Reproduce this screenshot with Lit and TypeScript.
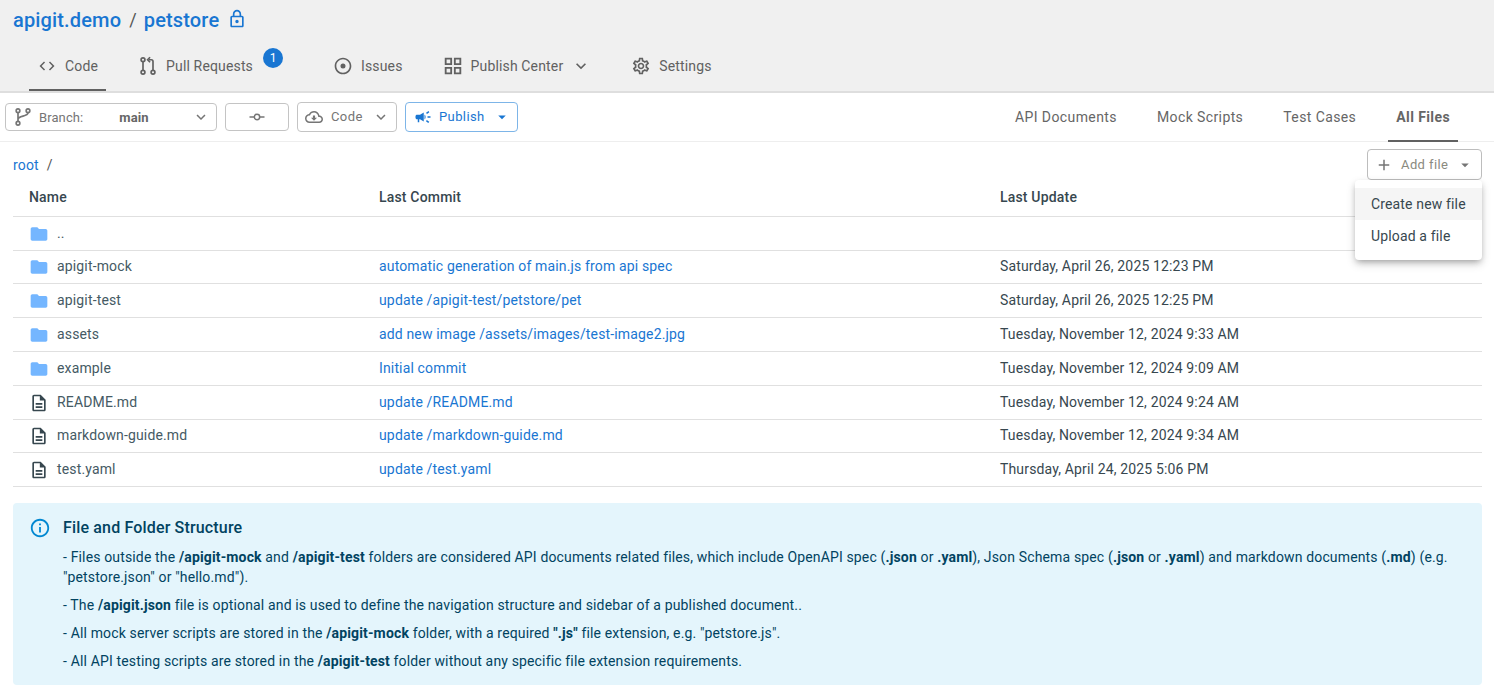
import {css, html, LitElement, svg} from 'lit';
import {customElement} from 'lit/decorators.js';
import {classMap} from 'lit/directives/class-map.js';

const P = {
  code: 'M9.4 16.6 4.8 12l4.6-4.6L8 6l-6 6 6 6 1.4-1.4zm5.2 0 4.6-4.6-4.6-4.6L16 6l6 6-6 6-1.4-1.4z',
  lock: 'M18 8h-1V6c0-2.76-2.24-5-5-5S7 3.24 7 6v2H6c-1.1 0-2 .9-2 2v10c0 1.1.9 2 2 2h12c1.1 0 2-.9 2-2V10c0-1.1-.9-2-2-2zM9 6c0-1.66 1.34-3 3-3s3 1.34 3 3v2H9V6zm9 14H6V10h12v10zm-6-3c1.1 0 2-.9 2-2s-.9-2-2-2-2 .9-2 2 .9 2 2 2z',
  radio: 'M12 2C6.48 2 2 6.48 2 12s4.48 10 10 10 10-4.48 10-10S17.52 2 12 2zm0 18c-4.42 0-8-3.58-8-8s3.58-8 8-8 8 3.58 8 8-3.58 8-8 8zm0-11a3 3 0 1 0 0 6 3 3 0 0 0 0-6z',
  grid: 'M3 3v8h8V3H3zm6 6H5V5h4v4zm-6 4v8h8v-8H3zm6 6H5v-4h4v4zm4-16v8h8V3h-8zm6 6h-4V5h4v4zm-6 4v8h8v-8h-8zm6 6h-4v-4h4v4z',
  chevron: 'M16.59 8.59 12 13.17 7.41 8.59 6 10l6 6 6-6z',
  gear: 'M19.43 12.98c.04-.32.07-.64.07-.98 0-.34-.03-.66-.07-.98l2.11-1.65c.19-.15.24-.42.12-.64l-2-3.46c-.09-.16-.26-.25-.44-.25-.06 0-.12.01-.17.03l-2.49 1c-.52-.4-1.08-.73-1.69-.98l-.38-2.65C14.46 2.18 14.25 2 14 2h-4c-.25 0-.46.18-.49.42l-.38 2.65c-.61.25-1.17.59-1.69.98l-2.49-1c-.06-.02-.12-.03-.18-.03-.17 0-.34.09-.43.25l-2 3.46c-.13.22-.07.49.12.64l2.11 1.65c-.04.32-.07.65-.07.98 0 .33.03.66.07.98l-2.11 1.65c-.19.15-.24.42-.12.64l2 3.46c.09.16.26.25.44.25.06 0 .12-.01.17-.03l2.49-1c.52.4 1.08.73 1.69.98l.38 2.65c.03.24.24.42.49.42h4c.25 0 .46-.18.49-.42l.38-2.65c.61-.25 1.17-.59 1.69-.98l2.49 1c.06.02.12.03.18.03.17 0 .34-.09.43-.25l2-3.46c.12-.22.07-.49-.12-.64l-2.11-1.65zm-1.98-1.71c.04.31.05.52.05.73 0 .21-.02.43-.05.73l-.14 1.13.89.7 1.08.84-.7 1.21-1.27-.51-1.04-.42-.9.68c-.43.32-.84.56-1.25.73l-1.06.43-.16 1.13-.2 1.35h-1.4l-.19-1.35-.16-1.13-1.06-.43c-.43-.18-.83-.41-1.23-.71l-.91-.7-1.06.43-1.27.51-.7-1.21 1.08-.84.89-.7-.14-1.13c-.03-.31-.05-.54-.05-.74s.02-.43.05-.73l.14-1.13-.89-.7-1.08-.84.7-1.21 1.27.51 1.04.42.9-.68c.43-.32.84-.56 1.25-.73l1.06-.43.16-1.13.2-1.35h1.39l.19 1.35.16 1.13 1.06.43c.43.18.83.41 1.23.71l.91.7 1.06-.43 1.27-.51.7 1.21-1.07.85-.89.7.14 1.13zM12 8c-2.21 0-4 1.79-4 4s1.79 4 4 4 4-1.79 4-4-1.79-4-4-4zm0 6c-1.1 0-2-.9-2-2s.9-2 2-2 2 .9 2 2-.9 2-2 2z',
  cloud: 'M19.35 10.04C18.67 6.59 15.64 4 12 4 9.11 4 6.6 5.64 5.35 8.04 2.34 8.36 0 10.91 0 14c0 3.31 2.69 6 6 6h13c2.76 0 5-2.24 5-5 0-2.64-2.05-4.78-4.65-4.96zM19 18H6c-2.21 0-4-1.79-4-4 0-2.05 1.53-3.76 3.56-3.97l1.07-.11.5-.95C8.08 7.14 9.94 6 12 6c2.62 0 4.88 1.86 5.39 4.43l.3 1.5 1.53.11c1.56.1 2.78 1.41 2.78 2.96 0 1.65-1.35 3-3 3zm-5.55-8h-2.9v3H8l4 4 4-4h-2.55z',
  campaign: 'M18 11v2h4v-2h-4zm-2 6.61c.96.71 2.21 1.65 3.2 2.39.4-.53.8-1.07 1.2-1.6-.99-.74-2.24-1.68-3.2-2.4-.4.54-.8 1.08-1.2 1.61zM20.4 5.6c-.4-.53-.8-1.07-1.2-1.6-.99.74-2.24 1.68-3.2 2.4.4.53.8 1.07 1.2 1.6.96-.72 2.21-1.65 3.2-2.4zM4 9c-1.1 0-2 .9-2 2v2c0 1.1.9 2 2 2h1v4h2v-4h1l5 3V6L8 9H4zm11.5 3c0-1.33-.58-2.53-1.5-3.35v6.69c.92-.81 1.5-2.01 1.5-3.34z',
  folder: 'M10 4H4c-1.1 0-1.99.9-1.99 2L2 18c0 1.1.9 2 2 2h16c1.1 0 2-.9 2-2V8c0-1.1-.9-2-2-2h-8l-2-2z',
  file: 'M8 16h8v2H8zm0-4h8v2H8zm6-10H6c-1.1 0-2 .9-2 2v16c0 1.1.89 2 1.99 2H18c1.1 0 2-.9 2-2V8l-6-6zm4 18H6V4h7v5h5v11z',
  info: 'M11 7h2v2h-2zm0 4h2v6h-2zm1-9C6.48 2 2 6.48 2 12s4.48 10 10 10 10-4.48 10-10S17.52 2 12 2zm0 18c-4.41 0-8-3.59-8-8s3.59-8 8-8 8 3.59 8 8-3.59 8-8 8z',
  add: 'M19 13h-6v6h-2v-6H5v-2h6V5h2v6h6v2z',
  drop: 'M7 10l5 5 5-5z',
};

const icon = (d: string, size: number, color = 'currentColor') => html`<svg
  class="ic" width=${size} height=${size} viewBox="0 0 24 24" fill=${color}>${svg`<path d=${d}></path>`}</svg>`;

const stroked = (body: unknown, size: number) => html`<svg
  class="ic" width=${size} height=${size} viewBox="0 0 24 24" fill="none"
  stroke="currentColor" stroke-width="2">${body}</svg>`;

const prIcon = stroked(svg`
  <circle cx="6" cy="4.5" r="2.3"></circle>
  <circle cx="6" cy="19.5" r="2.3"></circle>
  <circle cx="18" cy="19.5" r="2.3"></circle>
  <path d="M6 7v10M18 17V6.5a2 2 0 0 0-2-2h-3"></path>
  <path d="M14.5 1.5 11.5 4.5l3 3" ></path>`, 20);

const branchIcon = stroked(svg`
  <circle cx="6" cy="4.5" r="2.2"></circle>
  <circle cx="6" cy="19.5" r="2.2"></circle>
  <circle cx="18" cy="4.5" r="2.2"></circle>
  <path d="M6 7v10M18 7c0 5-12 3-12 8"></path>`, 20);

const commitIcon = stroked(svg`
  <circle cx="12" cy="12" r="3.6"></circle>
  <path d="M2 12h6M16 12h6"></path>`, 18);

// `short` rows come out a pixel lower than the rest in the original table
const rows = [
  {n: '..', c: '', u: '', f: true, short: false},
  {n: 'apigit-mock', c: 'automatic generation of main.js from api spec', u: 'Saturday, April 26, 2025 12:23 PM', f: true, short: true},
  {n: 'apigit-test', c: 'update /apigit-test/petstore/pet', u: 'Saturday, April 26, 2025 12:25 PM', f: true, short: false},
  {n: 'assets', c: 'add new image /assets/images/test-image2.jpg', u: 'Tuesday, November 12, 2024 9:33 AM', f: true, short: false},
  {n: 'example', c: 'Initial commit', u: 'Tuesday, November 12, 2024 9:09 AM', f: true, short: false},
  {n: 'README.md', c: 'update /README.md', u: 'Tuesday, November 12, 2024 9:24 AM', f: false, short: false},
  {n: 'markdown-guide.md', c: 'update /markdown-guide.md', u: 'Tuesday, November 12, 2024 9:34 AM', f: false, short: true},
  {n: 'test.yaml', c: 'update /test.yaml', u: 'Thursday, April 24, 2025 5:06 PM', f: false, short: false},
];

@customElement('app-root')
export class AppRoot extends LitElement {
  static override styles = css`
    :host {
      display: block;
      font-family: Roboto, 'Liberation Sans', sans-serif;
      font-size: 14px;
      letter-spacing: .15px;
      color: #37474f;
      background: #fff;
      min-height: 695px;
    }
    .ic { display: block; flex: none; }
    a { color: #1976d2; text-decoration: none; }

    .top {
      background: #f0f0f0;
      height: 93px;
      box-sizing: border-box;
      border-bottom: 2px solid #dedede;
      padding-left: 13px;
    }
    .repo {
      display: flex;
      align-items: center;
      height: 39px;
      font-size: 20px;
      font-weight: 500;
      color: #1976d2;
    }
    .repo .sep { margin: 0 7px 0 8px; font-weight: 400; color: #555; font-size: 18px; }
    .repo .ic { margin-left: 8px; margin-top: -2px; }
    .tabs { display: flex; height: 52px; padding-left: 16px; }
    .tab {
      position: relative;
      display: flex;
      align-items: center;
      gap: 8px;
      padding: 2px 8px 0;
      margin-right: 24px;
      color: #616161;
      box-sizing: border-box;
    }
    .tab.on { border-bottom: 2px solid #616161; padding: 4px 8px 0 9px; }
    .tab.on .ic { margin-right: 1px; }
    .tab.after-badge { margin-left: 40px; }
    .tab .big { display: flex; margin: 0 -1px; }
    .badge {
      position: absolute;
      top: 9px;
      right: -22px;
      width: 20px;
      height: 20px;
      border-radius: 50%;
      background: #1976d2;
      color: #fff;
      font-size: 12px;
      display: flex;
      align-items: center;
      justify-content: center;
      letter-spacing: 0;
    }

    .bar {
      display: flex;
      align-items: center;
      height: 49px;
      box-sizing: border-box;
      border-bottom: 1px solid #eeeeee;
      padding-left: 5px;
      gap: 8px;
    }
    .btn {
      display: flex;
      align-items: center;
      box-sizing: border-box;
      height: 30px;
      border: 1px solid #c4c4c4;
      border-radius: 4px;
      font-size: 13px;
      color: #757575;
      letter-spacing: .4px;
      white-space: nowrap;
    }
    .branch { width: 212px; height: 28px; padding-left: 7px; letter-spacing: .1px; }
    .branch b { margin-left: 36px; font-weight: 700; color: #666; }
    .branch .lbl { margin-left: 6px; }
    .branch .ic:last-child { margin-left: auto; margin-right: 6px; }
    .commit { width: 64px; height: 28px; justify-content: center; }
    .cloud { width: 100px; padding: 0 0 1px 7px; gap: 8px; }
    .cloud .ic:last-child { margin-left: auto; margin-right: 6px; }
    .publish { width: 113px; border-color: #7db5e8; color: #1976d2; padding: 0 0 1px 8px; gap: 7px; }
    .publish .ic:last-child { margin-left: 1px; }
    .views { display: flex; margin-left: auto; height: 48px; padding-right: 36px; gap: 24px; }
    .view {
      display: flex;
      align-items: center;
      padding: 0 8px;
      color: #666;
      letter-spacing: .4px;
      box-sizing: border-box;
    }
    .view.on { font-weight: 700; border-bottom: 2px solid #616161; margin-bottom: -1px; }

    .crumbs {
      position: relative;
      display: flex;
      align-items: center;
      height: 38px;
      box-sizing: border-box;
      padding: 8px 0 0 13px;
      gap: 8px;
    }
    .crumbs span { color: #555; }
    .add {
      position: absolute;
      right: 12px;
      top: 7px;
      width: 115px;
      height: 31px;
      padding-left: 7px;
      gap: 8px;
      color: #8a8a80;
      border-color: #bdbdbd;
    }
    .add .ic:first-child { color: #757575; }
    .add .ic:last-child { color: #757575; }
    .menu {
      position: absolute;
      right: 12px;
      top: 38px;
      width: 127px;
      padding: 8px 0;
      background: #fff;
      border-radius: 4px;
      box-shadow: 0 3px 6px -2px rgba(0,0,0,.3), 0 4px 10px rgba(0,0,0,.16);
      z-index: 2;
    }
    .menu div { height: 32px; padding-left: 16px; display: flex; align-items: center; }
    .menu div:first-child { background: #f5f5f5; }

    .table { margin: 0 12px 0 13px; }
    .row {
      display: grid;
      grid-template-columns: 350px 621px 1fr;
      align-items: center;
      height: 34px;
      border-bottom: 1px solid #e0e0e0;
      box-sizing: border-box;
      padding: 0 0 1px 16px;
    }
    .row.short { height: 33px; padding-bottom: 2px; }
    .head { height: 37px; padding-bottom: 2px; font-weight: 500; letter-spacing: .18px; }
    .name { display: flex; align-items: center; gap: 8px; color: #455a64; }
    .name .ic { color: #37474f; margin-top: 2px; }

    .note {
      margin: 16px 12px 0 13px;
      background: #e4f5fc;
      border-radius: 4px;
      color: #014361;
      padding: 14px 16px 10px;
      display: flex;
      gap: 12px;
      height: 182px;
      box-sizing: border-box;
    }
    .note .info { color: #0288d1; }
    .note h4 { margin: 0 0 8px; font-size: 16px; line-height: 22px; font-weight: 500; letter-spacing: .16px; }
    .note p { margin: 0 0 8px; line-height: 20px; }
  `;

  override render() {
    return html`
      <div class="top">
        <div class="repo">
          <span>apigit.demo</span><span class="sep">/</span><span>petstore</span>
          ${icon(P.lock, 20)}
        </div>
        <div class="tabs">
          <div class="tab on">${icon(P.code, 18)}Code</div>
          <div class="tab">${prIcon}Pull Requests<span class="badge">1</span></div>
          <div class="tab after-badge">${icon(P.radio, 20)}Issues</div>
          <div class="tab"><span class="big">${icon(P.grid, 22)}</span>Publish Center ${icon(P.chevron, 20)}</div>
          <div class="tab">${icon(P.gear, 20)}Settings</div>
        </div>
      </div>

      <div class="bar">
        <div class="btn branch">${branchIcon}<span class="lbl">Branch:</span><b>main</b>${icon(P.chevron, 18)}</div>
        <div class="btn commit">${commitIcon}</div>
        <div class="btn cloud">${icon(P.cloud, 18)}Code ${icon(P.chevron, 18)}</div>
        <div class="btn publish">${icon(P.campaign, 18)}Publish ${icon(P.drop, 18)}</div>
        <div class="views">
          <div class="view">API Documents</div>
          <div class="view">Mock Scripts</div>
          <div class="view">Test Cases</div>
          <div class="view on">All Files</div>
        </div>
      </div>

      <div class="crumbs">
        <a href="#">root</a><span>/</span>
        <div class="btn add">${icon(P.add, 18)}Add file ${icon(P.drop, 18)}</div>
        <div class="menu"><div>Create new file</div><div>Upload a file</div></div>
      </div>

      <div class="table">
        <div class="row head"><div>Name</div><div>Last Commit</div><div>Last Update</div></div>
        ${rows.map(r => html`
          <div class=${classMap({row: true, short: r.short})}>
            <div class="name">
              ${r.f ? icon(P.folder, 20, '#74b6ff') : icon(P.file, 20)}${r.n}
            </div>
            <div><a href="#">${r.c}</a></div>
            <div>${r.u}</div>
          </div>`)}
      </div>

      <div class="note">
        <div class="info">${icon(P.info, 22)}</div>
        <div>
          <h4>File and Folder Structure</h4>
          <p>- Files outside the <b>/apigit-mock</b> and <b>/apigit-test</b> folders are considered API documents related files, which include OpenAPI spec (<b>.json</b> or <b>.yaml</b>), Json Schema spec (<b>.json</b> or <b>.yaml</b>) and markdown documents (<b>.md</b>) (e.g. "petstore.json" or "hello.md").</p>
          <p>- The <b>/apigit.json</b> file is optional and is used to define the navigation structure and sidebar of a published document..</p>
          <p>- All mock server scripts are stored in the <b>/apigit-mock</b> folder, with a required <b>".js"</b> file extension, e.g. "petstore.js".</p>
          <p>- All API testing scripts are stored in the <b>/apigit-test</b> folder without any specific file extension requirements.</p>
        </div>
      </div>
    `;
  }
}
